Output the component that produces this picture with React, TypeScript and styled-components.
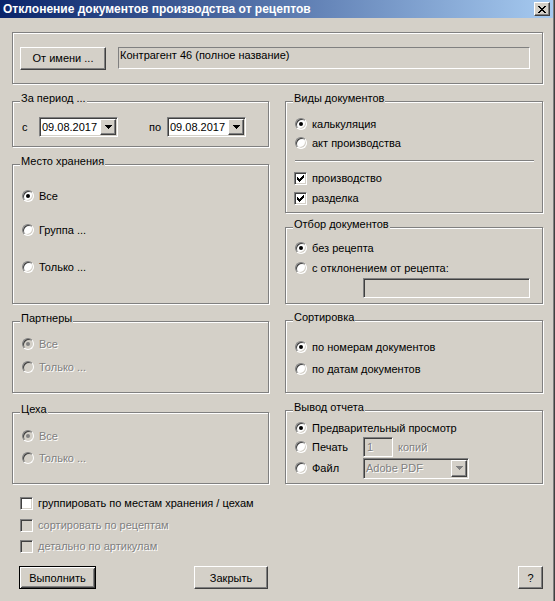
import styled, { createGlobalStyle, css } from 'styled-components'

const FACE = '#d4d0c8'
const SHADOW = '#808080'
const DARK = '#404040'
const LIGHT = '#ffffff'

const GlobalStyle = createGlobalStyle`
  html, body {
    margin: 0;
    padding: 0;
    background: ${FACE};
  }
  body {
    font-family: "Liberation Sans", Arial, sans-serif;
    font-size: 11px;
    color: #000;
  }
`

// classic 3D edges
const raised = css`
  border: 1px solid;
  border-color: ${LIGHT} ${DARK} ${DARK} ${LIGHT};
  box-shadow: inset -1px -1px 0 ${SHADOW}, inset 1px 1px 0 ${FACE};
`

const sunken = css`
  border: 1px solid;
  border-color: ${SHADOW} ${LIGHT} ${LIGHT} ${SHADOW};
  box-shadow: inset 1px 1px 0 ${DARK}, inset -1px -1px 0 ${FACE};
`

const etched = css`
  border: 1px solid ${SHADOW};
  box-shadow: inset 1px 1px 0 ${LIGHT}, 1px 1px 0 ${LIGHT};
`

const grayed = css`
  color: ${SHADOW};
  text-shadow: 1px 1px 0 ${LIGHT};
`

const Window = styled.div`
  width: 555px;
  height: 601px;
  box-sizing: border-box;
  border-right: 1px solid ${DARK};
  background: ${FACE};
  overflow: hidden;
`

const Frame = styled.div`
  height: 100%;
  border-right: 1px solid ${SHADOW};
  display: flex;
  flex-direction: column;
`

const TitleBar = styled.div`
  height: 18px;
  flex: none;
  display: flex;
  align-items: center;
  justify-content: space-between;
  padding: 0 3px;
  background: linear-gradient(to right, #0a246a, #a6caf0);
`

const Title = styled.span`
  color: #fff;
  font-weight: bold;
  font-size: 12px;
  line-height: 18px;
  white-space: nowrap;
`

const CloseBox = styled.span`
  width: 16px;
  height: 14px;
  box-sizing: border-box;
  background: ${FACE};
  ${raised};
  display: flex;
  align-items: center;
  justify-content: center;
`

const Body = styled.div`
  padding: 14px 10px 0 12px;
  display: flex;
  flex-direction: column;
`

const SenderBox = styled.div`
  height: 52px;
  box-sizing: border-box;
  ${etched};
  display: flex;
  align-items: center;
  gap: 12px;
  padding: 0 0 0 7px;
`

const StaticField = styled.div`
  width: 412px;
  height: 22px;
  box-sizing: border-box;
  border: 1px solid;
  border-color: ${SHADOW} ${LIGHT} ${LIGHT} ${SHADOW};
  padding: 1px 1px 0;
  line-height: 13px;
  white-space: nowrap;
`

const Columns = styled.div`
  display: grid;
  grid-template-columns: 257px 258px;
  column-gap: 16px;
  margin-top: 17px;
  align-items: start;
`

const Column = styled.div`
  display: flex;
  flex-direction: column;
`

const Group = styled.div<{ $h: number; $mt?: number }>`
  position: relative;
  box-sizing: border-box;
  height: ${(p) => p.$h}px;
  margin-top: ${(p) => p.$mt ?? 0}px;
  ${etched};
  padding-left: 9px;
  display: flex;
  flex-direction: column;
`

const Legend = styled.span`
  position: absolute;
  top: -10px;
  left: 7px;
  padding: 0 1px;
  background: ${FACE};
  line-height: 13px;
  white-space: nowrap;
`

const Row = styled.div<{ $mt?: number }>`
  display: flex;
  align-items: center;
  height: 16px;
  margin-top: ${(p) => p.$mt ?? 0}px;
  white-space: nowrap;
`

const DateRow = styled.div`
  display: flex;
  align-items: center;
  height: 20px;
  margin-top: 15px;
`

const Caption = styled.span<{ $w: number; $ml?: number; $off?: boolean }>`
  flex: none;
  width: ${(p) => p.$w}px;
  margin-left: ${(p) => p.$ml ?? 0}px;
  line-height: 16px;
  ${(p) => p.$off && grayed};
`

const OptionText = styled.span<{ $off?: boolean; $w?: number }>`
  margin-left: 5px;
  line-height: 16px;
  ${(p) => p.$w && `width: ${p.$w}px; flex: none;`}
  ${(p) => p.$off && grayed};
`

const RadioMark = styled.span<{ $on?: boolean; $off?: boolean }>`
  position: relative;
  flex: none;
  width: 12px;
  height: 12px;
  box-sizing: border-box;
  border-radius: 50%;
  border: 1px solid;
  border-color: ${SHADOW} ${LIGHT} ${LIGHT} ${SHADOW};
  background: ${(p) => (p.$off ? FACE : LIGHT)};
  box-shadow: inset 1px 1px 0 ${DARK}, inset -1px -1px 0 ${FACE};

  &::after {
    content: '';
    display: ${(p) => (p.$on ? 'block' : 'none')};
    position: absolute;
    left: 3px;
    top: 3px;
    width: 4px;
    height: 4px;
    border-radius: 50%;
    background: ${(p) => (p.$off ? SHADOW : '#000')};
  }
`

const CheckMark = styled.span<{ $off?: boolean }>`
  flex: none;
  width: 13px;
  height: 13px;
  box-sizing: border-box;
  ${sunken};
  background: ${(p) => (p.$off ? FACE : LIGHT)};
  display: flex;
  align-items: center;
  justify-content: center;
`

const Separator = styled.div`
  width: 239px;
  height: 0;
  margin-top: 9px;
  border-top: 1px solid ${SHADOW};
  border-bottom: 1px solid ${LIGHT};
`

const Combo = styled.div<{ $w: number; $h?: number; $off?: boolean }>`
  flex: none;
  display: flex;
  width: ${(p) => p.$w}px;
  height: ${(p) => p.$h ?? 20}px;
  box-sizing: border-box;
  ${sunken};
  padding: 1px;
  background: ${(p) => (p.$off ? FACE : LIGHT)};
`

const ComboText = styled.span<{ $off?: boolean }>`
  flex: 1;
  display: flex;
  align-items: center;
  padding-left: 1px;
  ${(p) => p.$off && grayed};
`

const ComboButton = styled.span`
  flex: none;
  width: 16px;
  box-sizing: border-box;
  background: ${FACE};
  ${raised};
  display: flex;
  align-items: center;
  justify-content: center;
`

const InputBox = styled.div<{ $w: number; $ml?: number; $mt?: number }>`
  flex: none;
  width: ${(p) => p.$w}px;
  height: 20px;
  margin-left: ${(p) => p.$ml ?? 0}px;
  margin-top: ${(p) => p.$mt ?? 0}px;
  box-sizing: border-box;
  ${sunken};
  background: ${FACE};
  padding: 0 3px;
  line-height: 18px;
  ${grayed};
`

const Options = styled.div`
  display: flex;
  flex-direction: column;
  margin-top: 11px;
  padding-left: 8px;
`

const Buttons = styled.div`
  display: flex;
  margin-top: 12px;
  padding-left: 7px;
`

const PushButton = styled.button<{ $w: number; $ml?: number; $default?: boolean }>`
  width: ${(p) => p.$w}px;
  height: 23px;
  margin-left: ${(p) => (p.$ml === undefined ? '0' : p.$ml < 0 ? 'auto' : `${p.$ml}px`)};
  box-sizing: border-box;
  padding: 0;
  background: ${FACE};
  font: inherit;
  color: #000;
  ${(p) =>
    p.$default
      ? css`
          border: 1px solid #000;
          box-shadow: inset 1px 1px 0 ${LIGHT}, inset -1px -1px 0 ${DARK}, inset 2px 2px 0 ${FACE},
            inset -2px -2px 0 ${SHADOW};
        `
      : raised};
`

interface IPixels {
  rows: string[]
  color: string
}

// tiny bitmap glyphs: check mark, combo arrow, close cross
const Pixels = ({ rows, color }: IPixels) => (
  <svg width={rows[0].length} height={rows.length} shapeRendering="crispEdges" style={{ display: 'block' }}>
    {rows.flatMap((line, y) =>
      [...line].map((c, x) =>
        c === '#' ? <rect key={`${x}_${y}`} x={x} y={y} width={1} height={1} fill={color} /> : null,
      ),
    )}
  </svg>
)

const CHECK = ['......#', '.....##', '#...###', '##.###.', '#####..', '.###...', '..#....']
const ARROW = ['#######', '.#####.', '..###..', '...#...']
const CROSS = ['##....##', '.##..##.', '..####..', '...##...', '..####..', '.##..##.', '##....##']

interface IRadio {
  label: string
  on?: boolean
  off?: boolean
  mt?: number
  width?: number
}

const Radio = ({ label, on, off, mt, width }: IRadio) => (
  <Row $mt={mt}>
    <RadioMark $on={on} $off={off} />
    <OptionText $off={off} $w={width}>
      {label}
    </OptionText>
  </Row>
)

interface ICheck {
  label: string
  checked?: boolean
  off?: boolean
  mt?: number
  ml?: number
}

const Check = ({ label, checked, off, mt, ml }: ICheck) => (
  <Row $mt={mt} style={ml ? { marginLeft: ml } : undefined}>
    <CheckMark $off={off}>{checked && <Pixels rows={CHECK} color="#000" />}</CheckMark>
    <OptionText $off={off}>{label}</OptionText>
  </Row>
)

const DateCombo = ({ value }: { value: string }) => (
  <Combo $w={79}>
    <ComboText>{value}</ComboText>
    <ComboButton>
      <Pixels rows={ARROW} color="#000" />
    </ComboButton>
  </Combo>
)

export default function App() {
  return (
    <>
      <GlobalStyle />
      <Window>
        <Frame>
          <TitleBar>
            <Title>Отклонение документов производства от рецептов</Title>
            <CloseBox>
              <Pixels rows={CROSS} color="#000" />
            </CloseBox>
          </TitleBar>

          <Body>
            <SenderBox>
              <PushButton $w={86}>От имени ...</PushButton>
              <StaticField>Контрагент 46 (полное название)</StaticField>
            </SenderBox>

            <Columns>
              <Column>
                <Group $h={46}>
                  <Legend>За период ...</Legend>
                  <DateRow>
                    <Caption $w={17}>с</Caption>
                    <DateCombo value="09.08.2017" />
                    <Caption $w={18} $ml={31}>
                      по
                    </Caption>
                    <DateCombo value="09.08.2017" />
                  </DateRow>
                </Group>

                <Group $h={140} $mt={17}>
                  <Legend>Место хранения</Legend>
                  <Radio label="Все" on mt={23} />
                  <Radio label="Группа ..." mt={18} />
                  <Radio label="Только ..." mt={21} />
                </Group>

                <Group $h={72} $mt={17}>
                  <Legend>Партнеры</Legend>
                  <Radio label="Все" on off mt={14} />
                  <Radio label="Только ..." off mt={7} />
                </Group>

                <Group $h={72} $mt={19}>
                  <Legend>Цеха</Legend>
                  <Radio label="Все" on off mt={15} />
                  <Radio label="Только ..." off mt={6} />
                </Group>
              </Column>

              <Column>
                <Group $h={112}>
                  <Legend>Виды документов</Legend>
                  <Radio label="калькуляция" on mt={14} />
                  <Radio label="акт производства" mt={3} />
                  <Separator />
                  <Check label="производство" checked mt={8} ml={-1} />
                  <Check label="разделка" checked mt={4} ml={-1} />
                </Group>

                <Group $h={77} $mt={14}>
                  <Legend>Отбор документов</Legend>
                  <Radio label="без рецепта" on mt={12} />
                  <Radio label="с отклонением от рецепта:" mt={4} />
                  <InputBox $w={167} $ml={68} $mt={2} />
                </Group>

                <Group $h={73} $mt={16}>
                  <Legend>Сортировка</Legend>
                  <Radio label="по номерам документов" on mt={18} />
                  <Radio label="по датам документов" mt={6} />
                </Group>

                <Group $h={74} $mt={17}>
                  <Legend>Вывод отчета</Legend>
                  <Radio label="Предварительный просмотр" on mt={9} />
                  <Row $mt={3}>
                    <RadioMark />
                    <OptionText $w={46}>Печать</OptionText>
                    <InputBox $w={30} $ml={5}>
                      1
                    </InputBox>
                    <Caption $w={40} $ml={5} $off>
                      копий
                    </Caption>
                  </Row>
                  <Row $mt={5}>
                    <RadioMark />
                    <OptionText $w={46}>Файл</OptionText>
                    <Combo $w={106} $h={21} $off style={{ marginLeft: 5 }}>
                      <ComboText $off>Adobe PDF</ComboText>
                      <ComboButton>
                        <Pixels rows={ARROW} color={SHADOW} />
                      </ComboButton>
                    </Combo>
                  </Row>
                </Group>
              </Column>
            </Columns>

            <Options>
              <Check label="группировать по местам хранения / цехам" />
              <Check label="сортировать по рецептам" off mt={6} />
              <Check label="детально по артикулам" off mt={5} />
            </Options>

            <Buttons>
              <PushButton $w={77} $default>
                Выполнить
              </PushButton>
              <PushButton $w={74} $ml={98}>
                Закрыть
              </PushButton>
              <PushButton $w={25} $ml={-1}>
                ?
              </PushButton>
            </Buttons>
          </Body>
        </Frame>
      </Window>
    </>
  )
}
